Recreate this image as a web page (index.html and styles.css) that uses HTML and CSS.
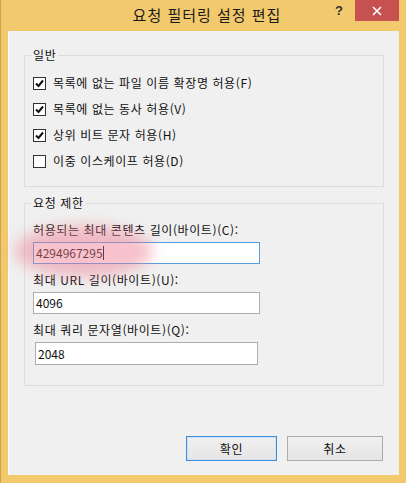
FILE: index.html
```html
<!DOCTYPE html>
<html lang="ko">
<head>
<meta charset="utf-8">
<title>요청 필터링 설정 편집</title>
<link rel="stylesheet" href="styles.css">
</head>
<body>
<div class="window">
  <div class="titlebar">
    <div></div>
    <div class="title">요청 필터링 설정 편집</div>
    <div class="caption-buttons">
      <span class="help">?</span>
      <span class="close">
        <svg width="10" height="10" viewBox="0 0 10 10"><path d="M1 1 L9 9 M9 1 L1 9" stroke="#fff" stroke-width="1.6" fill="none"/></svg>
      </span>
    </div>
  </div>
  <div class="client">
    <fieldset class="group group-general">
      <legend>일반</legend>
      <div class="check-row"><span class="box checked"><svg width="11" height="11" viewBox="0 0 11 11"><path d="M2 5.5 L4.5 8 L9 2.5" stroke="#111" stroke-width="2" fill="none"/></svg></span><span>목록에 없는 파일 이름 확장명 허용(F)</span></div>
      <div class="check-row"><span class="box checked"><svg width="11" height="11" viewBox="0 0 11 11"><path d="M2 5.5 L4.5 8 L9 2.5" stroke="#111" stroke-width="2" fill="none"/></svg></span><span>목록에 없는 동사 허용(V)</span></div>
      <div class="check-row"><span class="box checked"><svg width="11" height="11" viewBox="0 0 11 11"><path d="M2 5.5 L4.5 8 L9 2.5" stroke="#111" stroke-width="2" fill="none"/></svg></span><span>상위 비트 문자 허용(H)</span></div>
      <div class="check-row"><span class="box"></span><span>이중 이스케이프 허용(D)</span></div>
    </fieldset>
    <fieldset class="group group-limits">
      <legend>요청 제한</legend>
      <div class="smear"></div>
      <div class="field">
        <label>허용되는 최대 콘텐츠 길이(바이트)(C):</label>
        <div class="input focused">4294967295<span class="caret"></span></div>
      </div>
      <div class="field">
        <label>최대 URL 길이(바이트)(U):</label>
        <div class="input">4096</div>
      </div>
      <div class="field field-last">
        <label>최대 쿼리 문자열(바이트)(Q):</label>
        <div class="input inset">2048</div>
      </div>
    </fieldset>
    <div class="buttons">
      <div class="btn btn-ok">확인</div>
      <div class="btn btn-cancel">취소</div>
    </div>
  </div>
</div>
</body>
</html>
```
FILE: styles.css
```css
html, body {
  margin: 0;
  padding: 0;
  background: #f2c86b;
}
body {
  font-family: "Noto Sans CJK KR", "Noto Sans", sans-serif;
  font-size: 12px;
  color: #111;
}
.window {
  width: 406px;
  height: 483px;
  box-sizing: border-box;
  background: #f2c96c;
  border-left: 1px solid #cfa44c;
  display: flex;
  flex-direction: column;
  padding: 0 7px 8px 7px;
}
.titlebar {
  height: 31px;
  display: grid;
  grid-template-columns: 1fr auto 1fr;
  align-items: start;
  margin-right: -7px;
}
.title {
  font-size: 15px;
  line-height: 30px;
  color: #1a1a1a;
  letter-spacing: 1px;
}
.caption-buttons {
  display: flex;
  justify-content: flex-end;
  align-items: flex-start;
  padding-right: 7px;
}
.help {
  width: 20px;
  height: 21px;
  font-family: "Liberation Sans", sans-serif;
  font-weight: bold;
  font-size: 13px;
  line-height: 22px;
  color: #333;
  text-align: center;
  margin-right: 6px;
}
.close {
  width: 44px;
  height: 21px;
  background: #c75050;
  display: flex;
  align-items: center;
  justify-content: center;
}
.client {
  flex: 1;
  background: #f0f0f0;
  box-shadow: inset 1px 0 0 #fafafa;
  padding: 16px 15px 0 16px;
  display: flex;
  flex-direction: column;
}
.group {
  margin: 0;
  border: 1px solid #dcdcdc;
  padding: 0 8px;
  min-width: 0;
}
.group legend {
  padding: 0 2px;
  margin-left: -2px;
  line-height: 16px;
  color: #111;
  letter-spacing: 0.6px;
}
.group-general {
  padding-top: 7px;
  padding-bottom: 12px;
}
.check-row {
  height: 26px;
  display: flex;
  align-items: center;
  gap: 7px;
  line-height: 16px;
  letter-spacing: 0.6px;
}
.box {
  width: 11px;
  height: 11px;
  border: 1px solid #333;
  background: #fff;
  display: flex;
  align-items: center;
  justify-content: center;
}
.group-limits {
  margin-top: 8px;
  padding-top: 11px;
  padding-bottom: 20px;
  position: relative;
}
.field {
  display: flex;
  flex-direction: column;
  gap: 4px;
  margin-bottom: 8px;
}
.field-last {
  margin-bottom: 0;
}
.field label {
  line-height: 16px;
  letter-spacing: 0.6px;
}
.input {
  width: 227px;
  height: 22px;
  box-sizing: border-box;
  border: 1px solid #abadb3;
  background: #fff;
  line-height: 20px;
  padding-left: 2px;
  font-size: 12px;
  display: flex;
  align-items: center;
}
.input.focused {
  border-color: #569de5;
}
.input.inset {
  width: 223px;
  height: 23px;
  margin-left: 2px;
}
.caret {
  display: inline-block;
  width: 1px;
  height: 14px;
  background: #000;
}
.smear {
  position: absolute;
  left: -10px;
  top: 14px;
  width: 138px;
  height: 52px;
  border-radius: 50%;
  background: rgba(238, 120, 140, 0.45);
  filter: blur(7px);
  pointer-events: none;
}
.buttons {
  margin-top: 50px;
  display: flex;
  justify-content: flex-end;
  gap: 10px;
  margin-right: 1px;
}
.btn {
  height: 25px;
  box-sizing: border-box;
  border: 1px solid #acacac;
  background: linear-gradient(#f0f0f0, #e5e5e5);
  display: flex;
  align-items: center;
  justify-content: center;
  line-height: 16px;
  letter-spacing: 0.6px;
}
.btn-ok {
  width: 91px;
  border-color: #3c8ed8;
  box-shadow: inset 0 0 0 1px #cfe3f7;
}
.btn-cancel {
  width: 96px;
}
```
